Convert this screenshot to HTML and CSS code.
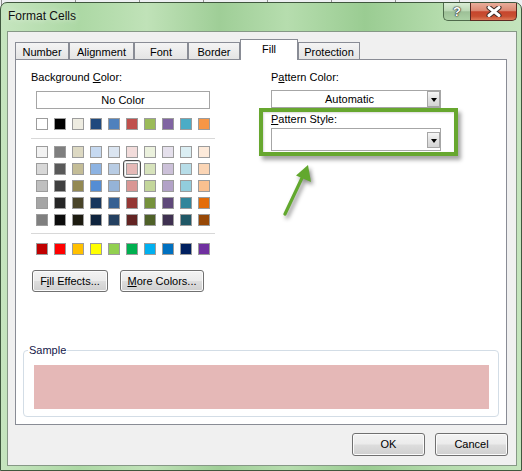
FILE: index.html
```html
<!DOCTYPE html>
<html>
<head>
<meta charset="utf-8">
<link rel="stylesheet" href="styles.css">
</head>
<body>
<div class="window">
  <div class="titlebar">
    <span class="title">Format Cells</span>
    <div class="caption">
      <div class="cap-help">?</div>
      <div class="cap-close">
        <svg width="16" height="11" viewBox="0 0 16 11">
          <path d="M3 1.5 L13 9.5 M13 1.5 L3 9.5" stroke="#3b2a26" stroke-width="5" stroke-linecap="round"/>
          <path d="M3 1.5 L13 9.5 M13 1.5 L3 9.5" stroke="#ffffff" stroke-width="3" stroke-linecap="round"/>
        </svg>
      </div>
    </div>
  </div>
  <div class="client">
    <div class="tabs">
      <div class="tab t-number">Number</div>
      <div class="tab t-align">Alignment</div>
      <div class="tab t-font">Font</div>
      <div class="tab t-border">Border</div>
      <div class="tab t-fill active">Fill</div>
      <div class="tab t-prot">Protection</div>
    </div>
    <div class="panel">
      <div class="cols">
        <div class="left">
          <div class="label">Background <u>C</u>olor:</div>
          <div class="nocolor">No Color</div>
          <div class="grid row1">
            <i style="background:#ffffff"></i><i style="background:#000000"></i><i style="background:#eeece1"></i><i style="background:#1f497d"></i><i style="background:#4f81bd"></i><i style="background:#c0504d"></i><i style="background:#9bbb59"></i><i style="background:#8064a2"></i><i style="background:#4bacc6"></i><i style="background:#f79646"></i>
          </div>
          <div class="sep"></div>
          <div class="grid theme">
            <i style="background:#f2f2f2"></i><i style="background:#7f7f7f"></i><i style="background:#ddd9c3"></i><i style="background:#c6d9f0"></i><i style="background:#dbe5f1"></i><i style="background:#f2dcdb"></i><i style="background:#ebf1dd"></i><i style="background:#e5e0ec"></i><i style="background:#dbeef3"></i><i style="background:#fdeada"></i>
            <i style="background:#d8d8d8"></i><i style="background:#595959"></i><i style="background:#c4bd97"></i><i style="background:#8db3e2"></i><i style="background:#b8cce4"></i><i class="sel" style="background:#e5b9b7"></i><i style="background:#d7e3bc"></i><i style="background:#ccc1d9"></i><i style="background:#b7dde8"></i><i style="background:#fbd5b5"></i>
            <i style="background:#bfbfbf"></i><i style="background:#3f3f3f"></i><i style="background:#938953"></i><i style="background:#548dd4"></i><i style="background:#95b3d7"></i><i style="background:#d99694"></i><i style="background:#c3d69b"></i><i style="background:#b2a2c7"></i><i style="background:#92cddc"></i><i style="background:#fac08f"></i>
            <i style="background:#a5a5a5"></i><i style="background:#262626"></i><i style="background:#494429"></i><i style="background:#17365d"></i><i style="background:#366092"></i><i style="background:#953734"></i><i style="background:#76923c"></i><i style="background:#5f497a"></i><i style="background:#31859b"></i><i style="background:#e36c09"></i>
            <i style="background:#7f7f7f"></i><i style="background:#0c0c0c"></i><i style="background:#1d1b10"></i><i style="background:#0f243e"></i><i style="background:#244061"></i><i style="background:#632423"></i><i style="background:#4f6128"></i><i style="background:#3f3151"></i><i style="background:#205867"></i><i style="background:#974806"></i>
          </div>
          <div class="sep sep2"></div>
          <div class="grid std">
            <i style="background:#c00000"></i><i style="background:#ff0000"></i><i style="background:#ffc000"></i><i style="background:#ffff00"></i><i style="background:#92d050"></i><i style="background:#00b050"></i><i style="background:#00b0f0"></i><i style="background:#0070c0"></i><i style="background:#002060"></i><i style="background:#7030a0"></i>
          </div>
          <div class="btnrow">
            <div class="btn b-fill">F<u>i</u>ll Effects...</div>
            <div class="btn b-more"><u>M</u>ore Colors...</div>
          </div>
        </div>
        <div class="right">
          <div class="label">P<u>a</u>ttern Color:</div>
          <div class="combo combo1">
            <span class="combo-text">Automatic</span>
            <span class="drop"><b></b></span>
          </div>
          <div class="label label2"><u>P</u>attern Style:</div>
          <div class="combo combo2">
            <span class="combo-text"></span>
            <span class="drop"><b></b></span>
          </div>
        </div>
      </div>
      <fieldset class="sample">
        <legend>Sample</legend>
        <div class="sample-fill"></div>
      </fieldset>
      <div class="highlight"></div>
      <svg class="arrow" width="40" height="60" viewBox="0 0 40 60">
        <line x1="5" y1="54" x2="22" y2="18" stroke="#62a82e" stroke-width="3.2" stroke-linecap="round"/>
        <polygon points="28,5 16,15.5 31,22" fill="#62a82e"/>
      </svg>
    </div>
    <div class="footer">
      <div class="btn b-dlg">OK</div>
      <div class="btn b-dlg">Cancel</div>
    </div>
  </div>
</div>
</body>
</html>
```

FILE: styles.css
```css
* { box-sizing: border-box; }
html, body { margin: 0; padding: 0; }
body {
  width: 522px;
  height: 471px;
  overflow: hidden;
  padding-top: 2px;
  font-family: "Liberation Sans", Arial, sans-serif;
  font-size: 11px;
  color: #000;
  background-color: #eef0f2;
  background-image: repeating-linear-gradient(90deg, transparent 0 63px, #8d8d8d 63px 64px);
  background-position: 12px 0;
}

.window {
  width: 522px;
  height: 469px;
  border: 1px solid #40573e;
  border-radius: 7px 7px 0 0;
  background: linear-gradient(90deg, #c6e5bf 0%, #acd8a4 15%, #c0e2b8 28%, #9fce97 42%, #b6ddae 55%, #9acc92 70%, #b5dcad 85%, #c4e4bd 100%);
  display: flex;
  flex-direction: column;
  padding: 0 4px 4px 6px;
}

.titlebar {
  height: 28px;
  display: flex;
  align-items: flex-start;
}
.title {
  padding: 6px 0 0 1px;
  font-size: 12px;
  line-height: 15px;
  color: #111;
  text-shadow: 0 0 6px rgba(255,255,255,0.8);
}
.caption {
  margin-left: auto;
  display: flex;
  height: 18px;
}
.cap-help {
  width: 27px;
  height: 18px;
  border: 1px solid #4f6b4c;
  border-top: none;
  border-right: none;
  border-radius: 0 0 0 5px;
  background: linear-gradient(#d9ecd5 0%, #bcd9b6 45%, #9dc097 52%, #acd1a5 100%);
  color: #fff;
  font-weight: bold;
  font-size: 13px;
  line-height: 17px;
  text-align: center;
  text-shadow: 0 0 1px #222, 0 0 1px #222, 0 0 2px #333;
}
.cap-close {
  width: 47px;
  height: 18px;
  border: 1px solid #5b2a22;
  border-top: none;
  border-radius: 0 0 5px 0;
  background: linear-gradient(#e9ad9b 0%, #dc8a74 44%, #c6452d 52%, #c84f31 78%, #dd7a58 100%);
  display: flex;
  align-items: center;
  justify-content: center;
}

.client {
  height: 435px;
  background: #f0f0f0;
  border: 1px solid #869886;
  padding: 7px 0 0 7px;
}

.tabs {
  display: flex;
  align-items: flex-end;
  height: 20px;
}
.tab {
  height: 17px;
  border: 1px solid #898c95;
  border-bottom: none;
  background: linear-gradient(#f4f4f4, #e4e4e4);
  text-align: center;
  line-height: 16px;
  padding-top: 1px;
}
.t-number { width: 54px; }
.t-align { width: 65px; }
.t-font { width: 54px; }
.t-border { width: 52px; }
.t-fill { width: 58px; }
.t-prot { width: 62px; }
.tab.active {
  height: 21px;
  margin-bottom: -1px;
  background: #fff;
  position: relative;
  z-index: 1;
  line-height: 17px;
  padding-top: 1px;
}

.panel {
  position: relative;
  width: 492px;
  height: 366px;
  background: #fff;
  border: 1px solid #898c95;
  padding: 10px 0 0 7px;
}

.cols {
  display: flex;
  padding-left: 8px;
}
.left { width: 184px; }
.right { width: 170px; margin-left: 56px; }

.label {
  height: 14px;
  line-height: 14px;
  white-space: nowrap;
}
.nocolor {
  margin: 7px 0 0 5px;
  width: 174px;
  height: 18px;
  border: 1px solid #a5a5a5;
  text-align: center;
  line-height: 16px;
}
.grid {
  display: grid;
  grid-template-columns: repeat(10, 12px);
  column-gap: 6px;
  row-gap: 5px;
  margin-left: 5px;
}
.grid i {
  display: block;
  width: 12px;
  height: 12px;
  border: 1px solid #9c9c9c;
}
.grid i.sel { position: relative; }
.grid i.sel::after {
  content: "";
  position: absolute;
  left: -4px;
  top: -4px;
  right: -4px;
  bottom: -4px;
  border: 1px solid #4e4e4e;
  border-radius: 3px;
  box-shadow: inset 0 0 0 1px #dcdcdc;
}
.row1 { margin-top: 9px; }
.sep {
  margin-top: 8px;
  height: 1px;
  background: #d8d8d8;
}
.theme { margin-top: 7px; }
.sep2 { margin-top: 7px; }
.std { margin-top: 9px; }

.btnrow {
  display: flex;
  gap: 12px;
  margin: 15px 0 0 1px;
}
.btn {
  height: 22px;
  border: 1px solid #707070;
  border-radius: 3px;
  background: linear-gradient(#f3f3f3 0%, #ebebeb 48%, #dddddd 52%, #cfcfcf 100%);
  box-shadow: inset 0 0 0 1px #fbfbfb;
  text-align: center;
  line-height: 20px;
  white-space: nowrap;
}
.b-fill { width: 76px; }
.b-more { width: 84px; }

.combo {
  display: flex;
  border: 1px solid #a6a6a6;
  background: #fff;
}
.combo1 { margin-top: 6px; height: 18px; }
.combo2 { margin-top: 2px; height: 23px; }
.label2 { margin-top: 4px; }
.combo-text {
  flex: 1;
  text-align: center;
  line-height: 16px;
}
.drop {
  width: 13px;
  border: 1px solid #a6a6a6;
  background: linear-gradient(#f6f6f6, #e2e2e2 50%, #d4d4d4);
  display: flex;
  align-items: center;
  justify-content: center;
}
.combo1 .drop { margin: 0 0 0 0; }
.combo2 .drop { margin: 3px 0 2px 0; }
.drop b {
  width: 0;
  height: 0;
  border-left: 3.5px solid transparent;
  border-right: 3.5px solid transparent;
  border-top: 4px solid #000;
  margin-top: 1px;
}

.sample {
  margin: 51px 0 0 0;
  width: 476px;
  padding: 0;
  border: 1px solid #d3dde6;
  border-radius: 4px;
}
.sample legend {
  margin-left: 4px;
  padding: 0 1px;
  line-height: 14px;
  color: #14184a;
}
.sample-fill {
  margin: 8px 9px 7px 10px;
  height: 44px;
  background: #e5b8b7;
}

.highlight {
  position: absolute;
  left: 243px;
  top: 48px;
  width: 199px;
  height: 48px;
  border: 4px solid #67a72f;
  box-shadow: 3px 4px 4px rgba(0,0,0,0.35), inset 1px 1px 2px rgba(0,0,0,0.15);
}
.arrow {
  position: absolute;
  left: 264px;
  top: 100px;
  filter: drop-shadow(2px 3px 2px rgba(0,0,0,0.45));
}

.footer {
  display: flex;
  justify-content: flex-end;
  gap: 10px;
  padding: 8px 8px 0 0;
}
.b-dlg {
  width: 73px;
  height: 23px;
  line-height: 21px;
}
```
